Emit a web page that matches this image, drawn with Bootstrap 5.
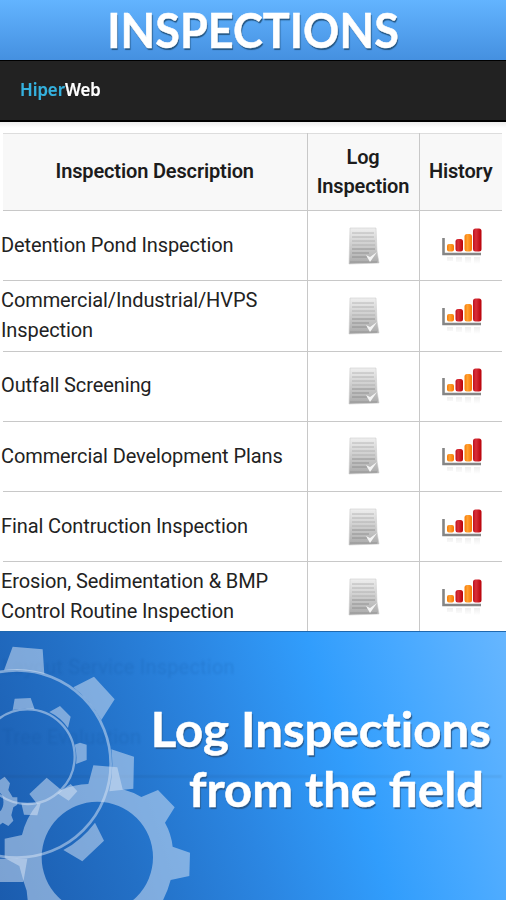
<!DOCTYPE html>
<html lang="en">
<head>
<meta charset="utf-8">
<meta name="viewport" content="width=device-width, initial-scale=1">
<title>Inspections</title>
<link href="https://cdn.jsdelivr.net/npm/bootstrap@5.3.0/dist/css/bootstrap.min.css" rel="stylesheet">
<style>
body{width:506px;height:900px;overflow:hidden;font-family:Roboto,"Noto Sans",sans-serif;background:#fff}
.banner{height:60px;background:linear-gradient(#63b4ff,#4590e0)}
.banner h1{font:700 48px/60px Lato,"Open Sans",sans-serif;transform:scaleX(.938);text-shadow:1px 2px 1px #245580;white-space:nowrap;-webkit-text-stroke:.5px #fff}
.appbar{height:62px;background:#222;border-top:1px solid #000;border-bottom:2px solid #000;padding:0 0 3px 20px}
.brand{font:600 18px/1 "Noto Sans",sans-serif;transform-origin:left;transform:scaleX(.93);color:#fff;-webkit-text-stroke:.2px}
.brand span{color:#35b1de}
.sheet{height:509px;overflow:hidden;background:linear-gradient(#ececec,#fff 6px);padding:11px 4px 0 3px}
.grid-table{width:499px;table-layout:fixed;border-collapse:collapse;color:#222;font-size:20px;line-height:29.5px}
.grid-table th,.grid-table td{padding:0;vertical-align:middle;border:1px solid #c8c8c8}
.grid-table tr>:first-child{border-left:0}
.grid-table tr>:last-child{border-right:0}
.grid-table th{height:77px;background:#f8f8f8;font-weight:600;text-align:center;letter-spacing:-.15px;border-top-color:#ddd;color:#1c1c1c}
.grid-table td{height:70.25px}
.label{display:block;margin-left:-2px;letter-spacing:-.1px;white-space:nowrap}
.icon-cell{padding-left:2px!important}
.promo{height:269px;background:linear-gradient(72deg,#1b5cae 0%,#2370c6 24%,#2b86e2 46%,#319dfc 66%,#46a8ff 80%,#66b6ff 100%);border-top:1px solid #1f68ae}
.ghost{color:#0b4a92;opacity:.17;font-size:20px;letter-spacing:.2px;filter:blur(.8px);top:20px;left:2px;right:4px}
.gears{left:0;top:0}
.slogan{z-index:2;color:#fff;font:700 48px/60px Lato,"Open Sans",sans-serif;text-shadow:1px 2px 1px #27588c;padding-top:67px;-webkit-text-stroke:.5px #fff}
.slogan div{white-space:nowrap;transform-origin:right}
.line-a{margin-right:15px;font-variant-ligatures:none;transform:scaleX(1.025)}
.line-b{margin-right:22px;transform:scaleX(1.018)}
</style>
</head>
<body>
<svg width="0" height="0" class="position-absolute">
  <defs>
    <linearGradient id="paper" x2="0" y2="1"><stop stop-color="#eee"/><stop offset="1" stop-color="#aaa"/></linearGradient>
    <linearGradient id="red" x2="1"><stop stop-color="#bd1020"/><stop offset=".35" stop-color="#d83038"/><stop offset="1" stop-color="#b80008"/></linearGradient>
    <linearGradient id="amber" x2="1"><stop stop-color="#f87c08"/><stop offset=".4" stop-color="#ffa030"/><stop offset="1" stop-color="#f87800"/></linearGradient>
    <linearGradient id="mirror" x2="0" y2="1"><stop stop-color="#ddd"/><stop offset="1" stop-color="#fff"/></linearGradient>
    <symbol id="doc" viewBox="0 0 32 38">
      <path d="M2 1H28L29 24L31 36L1 37Z" fill="url(#paper)" stroke="#ccc" stroke-width=".6"/>
      <path d="M4 6H26M4 10H26M4 14H27M4 18H27" stroke="#a8a8a8" opacity=".75"/>
      <path d="M4 22H27M4 26H21M4 30H19" stroke="#888" stroke-width="1.1" opacity=".8"/>
      <path d="M2 35H29" stroke="#999" stroke-width="1.200"/>
      <path d="M18 28L22 30L29 25L22 35Z" fill="#f4f4f4"/>
    </symbol>
    <symbol id="bars" viewBox="0 0 42 40">
      <path d="M2.500 12V28H40" fill="none" stroke="#858585" stroke-width="2.600"/>
      <rect x="6" y="18" width="7" height="7.500" rx="2" fill="url(#amber)"/>
      <rect x="14.500" y="13" width="7.500" height="12.500" rx="2.500" fill="url(#red)"/>
      <rect x="23.500" y="8" width="7.500" height="17.500" rx="2.500" fill="url(#amber)"/>
      <rect x="32" y="2.500" width="8.500" height="23" rx="2.500" fill="url(#red)"/>
      <path d="M6 31h6v4H6zM15 31h6v5h-6zM24 31h6v6h-6zM33 31h6v7h-6z" fill="url(#mirror)" opacity=".5"/>
    </symbol>
  </defs>
</svg>

<header class="banner text-center text-white"><h1 class="m-0">INSPECTIONS</h1></header>
<nav class="appbar d-flex align-items-center"><div class="brand"><span>Hiper</span>Web</div></nav>

<main class="sheet">
  <table class="grid-table">
    <colgroup><col style="width:304px"><col style="width:112px"><col style="width:83px"></colgroup>
    <thead><tr><th>Inspection Description</th><th>Log<br>Inspection</th><th>History</th></tr></thead>
    <tbody id="rows"></tbody>
  </table>
</main>

<section class="promo position-relative overflow-hidden text-end">
  <div class="ghost position-absolute d-flex flex-column text-start">
    <div>Layout Service Inspection</div>
    <div class="pt-4 mt-3 pb-4 border-bottom border-dark">Tree Evaluation</div>
  </div>
  <svg class="gears position-absolute" width="260" height="268" viewBox="0 36 780 804" fill="#d4e2f4" fill-opacity=".52">
    <circle cx="51" cy="432" r="281" fill="none" stroke="#d4e2f4" stroke-opacity=".52" stroke-width="8"/>
    <path d="M12 151L38 80L128 88L133 162Q76 146 12 151ZM220 202L282 170L344 238L304 300Q272 242 220 202ZM334 388L402 410L400 506L328 514Q342 452 334 388ZM190 690Q246 660 285 608L312 662L247 724ZM0 716H82L70 786H0Z"/>
    <circle cx="82" cy="410" r="142" fill="none" stroke="#d4e2f4" stroke-opacity=".52" stroke-width="7"/>
    <path d="M38 270L44 236L92 234L104 268Q70 262 38 270ZM148 276L180 258L212 290L204 324Q182 292 148 276ZM224 374L240 368L260 374V420L228 432Q232 402 224 374ZM172 520L212 492L232 514L206 542ZM64 550H122L112 586L72 584Z"/>
    <path fill-rule="evenodd" d="M265 492L280 436L352 442L368 508Q398 516 424 531L474 510L524 562L495 608Q514 642 518 680L570 698L568 768L512 780Q502 818 484 850H84L80 812L72 788L58 738L14 714V656L66 645Q78 594 112 553L88 522L140 473L184 510Q222 494 265 492ZM125 712A167 167 0 1 0 459 712A167 167 0 1 0 125 712Z"/>
    <path fill-rule="evenodd" d="M0 480L14 470L30 490L25 510L38 532L52 532V554L40 562L34 586L40 602L25 618L8 608L0 614V574A20 32 0 0 0 0 518Z"/>
  </svg>
  <div class="slogan position-relative">
    <div class="line-a">Log Inspections</div>
    <div class="line-b">from the field</div>
  </div>
</section>

<script src="https://cdn.jsdelivr.net/npm/bootstrap@5.3.0/dist/js/bootstrap.bundle.min.js"></script>
<script>
const items = ["Detention Pond Inspection","Commercial/Industrial/HVPS<br>Inspection","Outfall Screening","Commercial Development Plans","Final Contruction Inspection","Erosion, Sedimentation &amp; BMP<br>Control Routine Inspection"];
document.getElementById("rows").innerHTML = items.map(t =>
  `<tr><td><span class="label">${t}</span></td>
   <td class="icon-cell"><svg class="d-block mx-auto" width="32" height="38"><use href="#doc"/></svg></td>
   <td class="icon-cell"><svg class="d-block mx-auto" width="42" height="40"><use href="#bars"/></svg></td></tr>`).join("");
</script>
</body>
</html>
